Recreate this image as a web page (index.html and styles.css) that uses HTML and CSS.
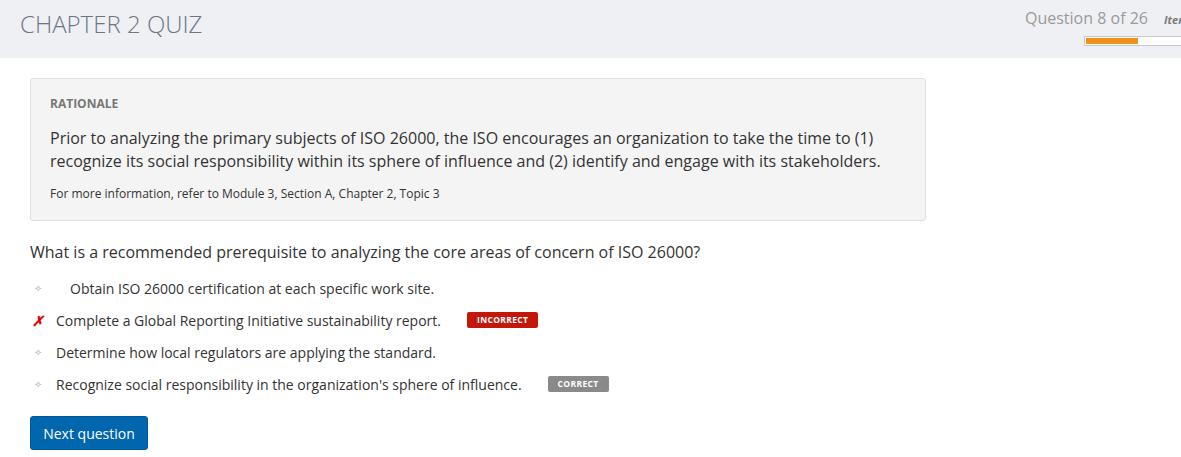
FILE: index.html
```html
<!DOCTYPE html>
<html>
<head>
<meta charset="utf-8">
<link rel="stylesheet" href="styles.css">
</head>
<body>
<header class="topbar">
  <h1 class="title">CHAPTER 2 QUIZ</h1>
  <div class="status">
    <div class="status-line">
      <span class="qcount">Question 8 of 26</span>
      <span class="item">Item</span>
    </div>
    <div class="progress"><div class="progress-fill" style="width:52px"></div></div>
  </div>
</header>
<main class="content">
  <section class="rationale">
    <div class="rationale-label">RATIONALE</div>
    <p class="rationale-text">Prior to analyzing the primary subjects of ISO 26000, the ISO encourages an organization to take the time to (1) recognize its social responsibility within its sphere of influence and (2) identify and engage with its stakeholders.</p>
    <p class="rationale-ref">For more information, refer to Module 3, Section A, Chapter 2, Topic 3</p>
  </section>
  <h2 class="question">What is a recommended prerequisite to analyzing the core areas of concern of ISO 26000?</h2>
  <ul class="options">
    <li class="option option-first"><span class="mark mark-dot">&#x2727;</span><span class="opt-text">Obtain ISO 26000 certification at each specific work site.</span></li>
    <li class="option"><span class="mark mark-x">&#x2717;</span><span class="opt-text">Complete a Global Reporting Initiative sustainability report.</span><span class="badge badge-incorrect">INCORRECT</span></li>
    <li class="option"><span class="mark mark-dot">&#x2727;</span><span class="opt-text">Determine how local regulators are applying the standard.</span></li>
    <li class="option"><span class="mark mark-dot">&#x2727;</span><span class="opt-text">Recognize social responsibility in the organization's sphere of influence.</span><span class="badge badge-correct">CORRECT</span></li>
  </ul>
  <button class="next-btn">Next question</button>
</main>
</body>
</html>
```

FILE: styles.css
```css
* { box-sizing: border-box; }
html, body { margin: 0; padding: 0; }
body {
  font-family: "Open Sans", "Noto Sans", sans-serif;
  background: #fff;
  color: #333;
  width: 1181px;
  height: 457px;
  overflow: hidden;
}
.topbar {
  height: 58px;
  background: #eff0f4;
  display: flex;
  justify-content: space-between;
  align-items: flex-start;
  padding-left: 20px;
  overflow: hidden;
}
.title {
  margin: 9px 0 0 0;
  font-size: 24px;
  font-weight: 300;
  color: #6d7585;
  letter-spacing: 0;
  line-height: 30px;
}
.status {
  display: flex;
  flex-direction: column;
  align-items: flex-start;
  padding-top: 7px;
  width: 156px;
  flex-shrink: 0;
}
.status-line {
  display: flex;
  align-items: baseline;
  white-space: nowrap;
}
.qcount {
  font-size: 16px;
  color: #9a9a9a;
  line-height: 22px;
}
.item {
  margin-left: 16px;
  font-size: 11px;
  font-weight: 700;
  font-style: italic;
  color: #7a7a7a;
}
.progress {
  margin-top: 7px;
  margin-left: 59px;
  width: 120px;
  height: 10px;
  background: #fff;
  border: 1px solid #c8c8c8;
  border-right: none;
  padding: 1px;
}
.progress-fill {
  height: 100%;
  background: #f38f1f;
}
.content {
  padding: 20px 30px 0 30px;
}
.rationale {
  width: 896px;
  background: #f4f4f4;
  border: 1px solid #dfdfdf;
  border-radius: 3px;
  padding: 17px 19px 18px 19px;
}
.rationale-label {
  font-size: 12px;
  font-weight: 700;
  color: #777;
  line-height: 16px;
}
.rationale-text {
  margin: 15px 0 0 0;
  font-size: 16px;
  line-height: 23px;
  color: #333;
}
.rationale-ref {
  margin: 13px 0 0 0;
  font-size: 12px;
  line-height: 16px;
  color: #333;
}
.question {
  margin: 20px 0 0 0;
  font-size: 16px;
  font-weight: 400;
  line-height: 22px;
  color: #333;
}
.options {
  list-style: none;
  margin: 9px 0 0 0;
  padding: 0;
}
.option {
  display: flex;
  align-items: center;
  height: 32px;
  font-size: 14px;
  color: #333;
}
.mark {
  width: 26px;
  flex-shrink: 0;
  padding-left: 2px;
}
.mark-dot {
  font-size: 10px;
  color: #aaa;
  padding-left: 4px;
}
.option-first .mark { width: 40px; }
.mark-x {
  color: #e30000;
  font-size: 14px;
  font-weight: 700;
  font-style: italic;
}
.badge {
  margin-left: 26px;
  font-size: 8.5px;
  font-weight: 700;
  color: #fff;
  letter-spacing: 0.35px;
  line-height: 16px;
  height: 16px;
  padding: 0 10px;
  border-radius: 2px;
}
.badge-incorrect { background: #c4170c; }
.badge-correct { background: #8a8a8a; }
.next-btn {
  margin-top: 16px;
  font-family: "Open Sans", "Noto Sans", sans-serif;
  font-size: 14px;
  color: #fff;
  background: #0066ad;
  border: 1px solid #00589a;
  border-radius: 3px;
  height: 34px;
  width: 118px;
  padding: 0;
}
```
